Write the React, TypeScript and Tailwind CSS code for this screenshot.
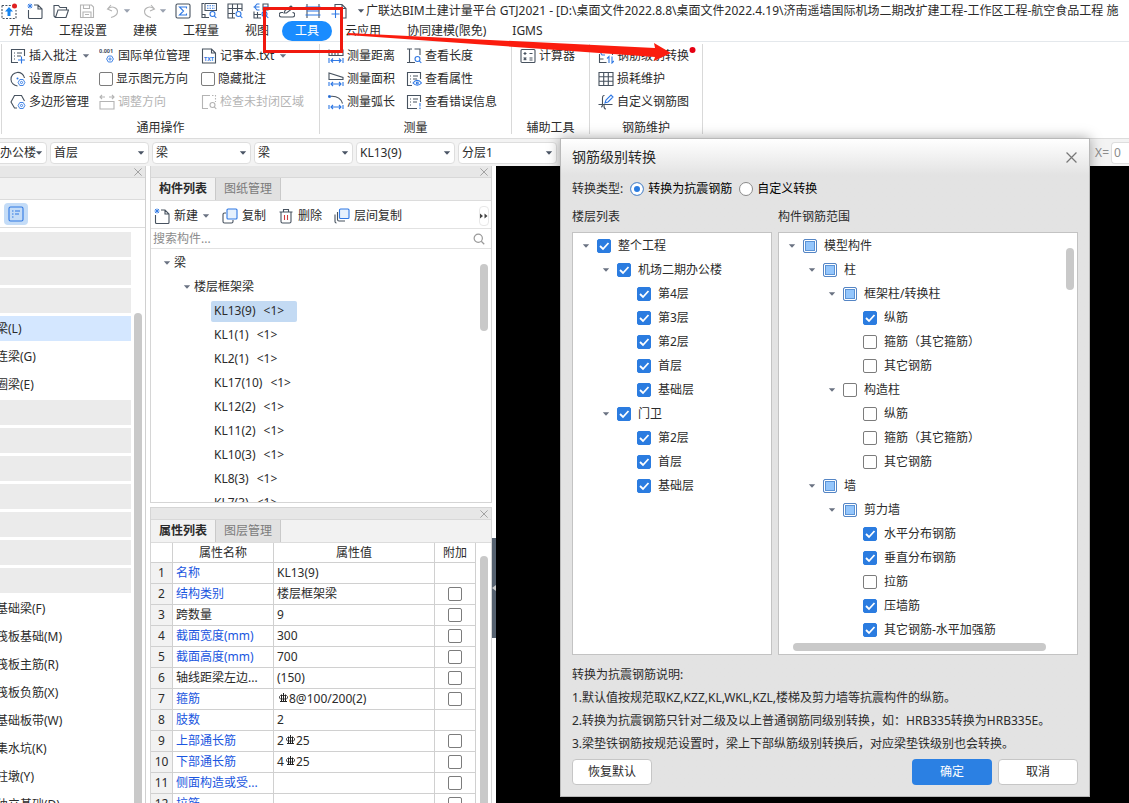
import { useState } from "react";
import type { ReactNode } from "react";
import clsx from "clsx";

const DARK = "#47525f";
const BLUE = "#2f78e4";
const GREY = "#b4b4b4";

const Svg = ({ children, color = DARK, size = 16 }: { children: ReactNode; color?: string; size?: number }) => (
  <svg width={size} height={size} viewBox="0 0 16 16" fill="none" stroke={color} strokeWidth="1.1" className="shrink-0" aria-hidden="true">
    {children}
  </svg>
);

const Caret = ({ className = "text-gray-600" }: { className?: string }) => (
  <svg width="8" height="8" viewBox="0 0 8 8" className={clsx("shrink-0", className)} aria-hidden="true">
    <path d="M0.800 2.200h6.400L4 5.800z" fill="currentColor" />
  </svg>
);

const Gear = ({ x = 11.5, y = 11.5 }: { x?: number; y?: number }) => (
  <g stroke={BLUE} strokeWidth="0.9">
    <path d={`M${x - 1.7} ${y - 3}h3.4l1.7 3l-1.7 3h-3.4l-1.7 -3z`} fill="#fff" />
    <circle cx={x} cy={y} r="1.1" />
  </g>
);

const Lens = ({ color = BLUE }: { color?: string }) => (
  <g stroke={color}>
    <circle cx="11.5" cy="11" r="2.5" fill="#fff" />
    <path d="M13.3 12.8l2 2.2" />
  </g>
);

const icons = {
  update: (
    <Svg>
      <path d="M1 2.500h9M1 2.500v13h14V7" strokeDasharray="2 1.4" />
      <path d="M8 4l4 4.500H9.500V13h-3V8.500H4z" fill="#1684f0" stroke="none" />
      <circle cx="13.500" cy="3" r="2.500" fill="#e02020" stroke="none" />
    </Svg>
  ),
  create: (
    <Svg>
      <path d="M7 2h4l4 4v8.500a1 1 0 0 1-1 1H2.500a1 1 0 0 1-1-1V7M11 2v4h4" />
      <path d="M1 1l4 4M5 1L1 5M3 0.500v5M0.500 3h5" stroke={BLUE} strokeWidth="0.9" />
    </Svg>
  ),
  open: (
    <Svg>
      <path d="M2.500 14.500L1 13V2.500h4.500l1.500 2h6.500V7M2.500 14.500L5 7h10.500L13 14.500z" />
    </Svg>
  ),
  save: (
    <Svg color={GREY}>
      <path d="M1.500 2h11l2 2v10.500h-13zM4.500 2v3.500h6V2M4 14.500V9h8v5.500M6 11.500h4" />
    </Svg>
  ),
  undo: (
    <Svg color={GREY}>
      <path d="M6 2L2.500 6l4.500 2M2.500 6c5-4 10-1 10 2.500S10 13.500 6 14.500" />
    </Svg>
  ),
  redo: (
    <Svg color={GREY}>
      <path d="M10 2l3.500 4L9 8M13.500 6c-5-4-10-1-10 2.500s2.500 5 6.500 6" />
    </Svg>
  ),
  sum: (
    <Svg>
      <rect x="1" y="1" width="14" height="14" rx="1.500" />
      <path d="M11.500 5.500V4h-7l4 4-4 4h7v-1.500" stroke={BLUE} />
    </Svg>
  ),
  calcView: (
    <Svg>
      <path d="M4 0.500h11.500v7H4zM3 0.500H1v14h7M1 11.500h3v3" />
      <path d="M6 2.700h8M6 5.200h8" stroke={BLUE} strokeDasharray="1.500 1" />
      <Lens />
    </Svg>
  ),
  tableView: (
    <Svg>
      <path d="M15 8V1H1v14h7M1 5.500h14M1 10.500h7M5.500 1v14M10.500 1v7" />
      <Lens />
    </Svg>
  ),
  unitView: (
    <Svg>
      <path d="M1 8.500V15h7M1 11.500h7M4.500 9v6M10 1h5v6h-5z" />
      <path d="M6.500 1H4L1.500 4 4 7h2.500M0.500 4h6M10 4h5" stroke={BLUE} />
      <Lens />
    </Svg>
  ),
  draw: (
    <Svg>
      <path d="M6 7.500L12 3l2 2-6.500 5H5z" />
      <path d="M4 9.500H2.500a2 2 0 0 0 0 4.500h11a2 2 0 0 0 0-4.500" />
    </Svg>
  ),
  span: (
    <Svg>
      <path d="M2 1v14M14 1v14" />
      <path d="M0.500 4h15M0.500 12h15M2 8h12" stroke={BLUE} />
    </Svg>
  ),
  addPage: (
    <Svg>
      <path d="M4 5V1.500h7l4 4V15H9M11 1.500v4h4" />
      <path d="M4.500 7v8M0.500 11h8" stroke={BLUE} />
    </Svg>
  ),
  note: (
    <Svg>
      <path d="M8 14.500H1.500v-13h13V8M4 5h1M7 5h5M4 8h1M7 8h4M4 11h1" />
      <path d="M11.500 8.500v7M8 12h7" stroke={BLUE} />
    </Svg>
  ),
  origin: (
    <Svg>
      <path d="M14.500 7a6.800 6.800 0 1 0-7 8" />
      <circle cx="7.500" cy="7.500" r="1" fill={BLUE} stroke="none" />
      <Gear />
    </Svg>
  ),
  polygon: (
    <Svg>
      <path d="M14.500 7L11.500 1.500h-7L1 8l3.500 6H7" />
      <Gear />
    </Svg>
  ),
  txt: (
    <Svg>
      <path d="M1.500 1h9l4 4v10h-13zM10.500 1v4h4" />
      <text x="3" y="12.500" fontSize="5.500" fontWeight="700" fill={BLUE} stroke="none" fontFamily="Noto Sans">TXT</text>
    </Svg>
  ),
  unit: (
    <Svg>
      <text x="0" y="5" fontSize="5.500" fontWeight="700" fill={DARK} stroke="none" fontFamily="Noto Sans">0.001</text>
      <Gear x={11} y={11} />
    </Svg>
  ),
  adjust: (
    <Svg color={GREY}>
      <path d="M1 7.500h14V15H1zM1 3h5M10 3h5M3 1L1 3l2 2M13 1l2 2-2 2" />
    </Svg>
  ),
  closed: (
    <Svg color={GREY}>
      <path d="M7 14.500H1.500v-13H9" />
      <path d="M14.500 1v7M11 1.500h4" strokeDasharray="1.500 1.500" />
      <Lens color={GREY} />
    </Svg>
  ),
  distance: (
    <Svg>
      <path d="M1 1.500v6h14v-6M4 7.500V5M7 7.500V5M10 7.500V5" />
      <path d="M1 10v5M15 10v5M3 12.500h10M5 10.500l-2 2 2 2M11 10.500l2 2-2 2" stroke={BLUE} />
    </Svg>
  ),
  area: (
    <Svg>
      <path d="M1 2v6.500h14V6.500z" />
      <path d="M1 11v4M15 11v4M3 13h10M5 11l-2 2 2 2M11 11l2 2-2 2" stroke={BLUE} />
    </Svg>
  ),
  arc: (
    <Svg>
      <path d="M1 2.500c8-1 12 2 13.500 7" />
      <circle cx="1.500" cy="2.500" r="1" stroke={BLUE} />
      <path d="M1 11v4M15 11v4M3 13h10M5 11l-2 2 2 2M11 11l2 2-2 2" stroke={BLUE} />
    </Svg>
  ),
  length: (
    <Svg>
      <path d="M9 14.500H5M8.500 1h5.500v6M1 1h5M3.500 1v13.500M1 14.500h5" />
      <Lens />
    </Svg>
  ),
  property: (
    <Svg>
      <path d="M6 14.500H1.500v-13h13V8M4 5h1M7 5h5M4 8h1M7 8h4M4 11h1" />
      <path d="M7 12c2.500-3.500 6-3.500 8.500 0-2.500 3-6 3-8.500 0z" stroke={BLUE} fill="#fff" />
      <circle cx="11.300" cy="12" r="1" stroke={BLUE} />
    </Svg>
  ),
  error: (
    <Svg>
      <path d="M11 14.500H1.500v-13h13V8M4 5h1M7 5h5M4 8h1M7 8h4M4 11h1" />
      <path d="M14 9v3.500M14 13.500v1.500" stroke={BLUE} />
    </Svg>
  ),
  calculator: (
    <Svg>
      <rect x="1" y="1.500" width="14" height="13" rx="1" />
      <path d="M3.500 5.500h3M5 4v3M9.500 5.500h3M3.700 9.500l2.600 2.600M6.300 9.500l-2.600 2.600M9.500 10h3M9.500 12h3" />
    </Svg>
  ),
  convert: (
    <Svg>
      <path d="M1.500 6v8.500h7M14.500 7V3H9M1.500 11h4" />
      <path d="M7 2H4L2.500 4.500 4 7h3M2 4.500h4M11 15V8.500l-2 2M14 8.500V15l2-2" stroke={BLUE} />
    </Svg>
  ),
  grid: (
    <Svg>
      <path d="M1 1.500h14v13H1zM1 5.800h14M1 10.200h14M5.700 1.500v13M10.300 1.500v13" />
    </Svg>
  ),
  custom: (
    <Svg>
      <path d="M6.500 1.500C4 1 4.500 4 4.500 8s0 5-1.500 5M0.500 10.500h14M6 10.500c0 3 0 4.500 2 4.500" />
      <path d="M7 9l1-3 5-5 2 2-5 5z" stroke={BLUE} />
    </Svg>
  ),
  copy: (
    <Svg>
      <path d="M4 5H2.500A1.500 1.500 0 0 0 1 6.500v7A1.500 1.500 0 0 0 2.500 15h7a1.500 1.500 0 0 0 1.500-1.500V12" />
      <rect x="5" y="1" width="10" height="10" rx="1" stroke={BLUE} fill="#e6f1fd" />
    </Svg>
  ),
  remove: (
    <Svg>
      <path d="M1.500 4h13M5.500 4V1.500h5V4M3 4v9.500A1.500 1.500 0 0 0 4.500 15h7a1.500 1.500 0 0 0 1.500-1.500V4" />
      <path d="M6.500 7v5M9.500 7v5" stroke="#d23c3c" />
    </Svg>
  ),
  floorCopy: (
    <Svg>
      <path d="M1 6.500v7A1.500 1.500 0 0 0 2.500 15M3.500 4v7.500A1.500 1.500 0 0 0 5 13h6" />
      <rect x="5.500" y="1" width="9.500" height="9.500" rx="1" stroke={BLUE} fill="#e6f1fd" />
    </Svg>
  ),
  list: (
    <Svg color={BLUE}>
      <rect x="1" y="1" width="14" height="14" rx="1.500" />
      <path d="M4 5h1.500M7 5h5M4 8h1.500M7 8h4M4 11h1.500" />
    </Svg>
  ),
};

type IconName = keyof typeof icons;

const Close = ({ size = 8, className }: { size?: number; className?: string }) => (
  <svg width={size} height={size} viewBox="0 0 10 10" stroke="currentColor" strokeWidth="1.100" className={className} aria-hidden="true">
    <path d="M0.500 0.500l9 9M9.500 0.500l-9 9" />
  </svg>
);

type CheckState = "on" | "off" | "mixed";

const Check = ({ state = "off", id, label }: { state?: CheckState; id?: string; label?: string }) => {
  const [value, setValue] = useState(state);
  return (
    <span className="relative flex size-3.5 shrink-0">
      <input
        type="checkbox"
        id={id}
        aria-label={label}
        checked={value === "on"}
        onChange={() => setValue(value === "on" ? "off" : "on")}
        className={clsx(
          "size-3.5 appearance-none rounded-xs border",
          value === "on" && "border-[#2b7ce0] bg-[#2b7ce0]",
          value === "off" && "border-[#7c7c7c] bg-white",
          value === "mixed" && "border-[#5585c4] bg-[#94c6fc] shadow-[inset_0_0_0_1px_white,inset_0_0_0_2px_#5b93d6]",
        )}
      />
      {value === "on" && (
        <svg viewBox="0 0 14 14" className="pointer-events-none absolute inset-0" fill="none" stroke="#fff" strokeWidth="1.800" aria-hidden="true">
          <path d="M3 7l3 3 5.500-6" />
        </svg>
      )}
    </span>
  );
};

const Tool = ({ icon, children, caret, disabled }: { icon: IconName; children: ReactNode; caret?: boolean; disabled?: boolean }) => (
  <button type="button" disabled={disabled} className={clsx("flex h-[23px] items-center gap-[3px] whitespace-nowrap", disabled && "text-[#b4b4b4]")}>
    {icons[icon]}
    {children}
    {caret && <Caret className="ml-0.5 text-gray-500" />}
  </button>
);

const ToolCheck = ({ id, children }: { id: string; children: ReactNode }) => (
  <label htmlFor={id} className="flex h-[23px] items-center gap-[3px] whitespace-nowrap">
    <Check id={id} />
    {children}
  </label>
);

const RibbonGroup = ({ title, className, children }: { title: string; className: string; children: ReactNode }) => (
  <section className={clsx("flex shrink-0 flex-col border-r border-[#d9d9d9]", className)}>
    <div className="flex h-[76px] shrink-0 pl-2">{children}</div>
    <h2 className="text-center">{title}</h2>
  </section>
);

const quickIcons: IconName[] = ["update", "create", "open", "save"];
const viewIcons: IconName[] = ["sum", "calcView", "tableView", "unitView", "draw", "span", "addPage"];
const menuTabs = ["开始", "工程设置", "建模", "工程量", "视图", "工具", "云应用", "协同建模(限免)", "IGMS"];

const TitleBar = () => (
  <div className="flex h-[21px] items-center gap-2 pl-px">
    <div className="flex items-center gap-2.5">
      {quickIcons.map((name) => (
        <button key={name} type="button" aria-label={name}>{icons[name]}</button>
      ))}
      <button type="button" aria-label="undo" className="flex items-center gap-0.5">{icons.undo}<Caret className="text-gray-400" /></button>
      <button type="button" aria-label="redo" className="flex items-center gap-0.5">{icons.redo}<Caret className="text-gray-400" /></button>
    </div>
    <div className="flex items-center gap-2.5">
      {viewIcons.map((name) => (
        <button key={name} type="button" aria-label={name}>{icons[name]}</button>
      ))}
      <Caret />
    </div>
    <h1 className="-ml-[7px] whitespace-nowrap">
      广联达BIM土建计量平台 GTJ2021 - [D:\桌面文件2022.8.8\桌面文件2022.4.19\济南遥墙国际机场二期改扩建工程-工作区工程-航空食品工程 施
    </h1>
  </div>
);

const MenuBar = () => (
  <nav className="flex h-[21px] items-end gap-[26px] border-b border-[#e4e8ec] pl-[9px]">
    {menuTabs.map((tab) => (
      <button
        key={tab}
        type="button"
        className={clsx("h-5 whitespace-nowrap", tab === "工具" && "-mx-[13px] rounded-full bg-[#1a8cff] px-[13px] text-white")}
      >
        {tab}
      </button>
    ))}
  </nav>
);

const Ribbon = () => (
  <div className="flex h-[97px] border-b border-[#dcdcdc] pt-0.5 pb-1 pl-px">
    <RibbonGroup title="通用操作" className="w-[319px] border-l">
      <div className="w-[89px]">
        <Tool icon="note" caret>插入批注</Tool>
        <Tool icon="origin">设置原点</Tool>
        <Tool icon="polygon">多边形管理</Tool>
      </div>
      <div className="w-[102px]">
        <Tool icon="unit">国际单位管理</Tool>
        <ToolCheck id="show-direction">显示图元方向</ToolCheck>
        <Tool icon="adjust" disabled>调整方向</Tool>
      </div>
      <div>
        <Tool icon="txt" caret>记事本.txt</Tool>
        <ToolCheck id="hide-note">隐藏批注</ToolCheck>
        <Tool icon="closed" disabled>检查未封闭区域</Tool>
      </div>
    </RibbonGroup>
    <RibbonGroup title="测量" className="w-[192px]">
      <div className="w-[78px]">
        <Tool icon="distance">测量距离</Tool>
        <Tool icon="area">测量面积</Tool>
        <Tool icon="arc">测量弧长</Tool>
      </div>
      <div>
        <Tool icon="length">查看长度</Tool>
        <Tool icon="property">查看属性</Tool>
        <Tool icon="error">查看错误信息</Tool>
      </div>
    </RibbonGroup>
    <RibbonGroup title="辅助工具" className="w-[78px]">
      <Tool icon="calculator">计算器</Tool>
    </RibbonGroup>
    <RibbonGroup title="钢筋维护" className="w-[113px]">
      <div>
        <Tool icon="convert">钢筋级别转换</Tool>
        <Tool icon="grid">损耗维护</Tool>
        <Tool icon="custom">自定义钢筋图</Tool>
      </div>
    </RibbonGroup>
  </div>
);

const selectors = [
  { label: "楼层", value: "首层" },
  { label: "构件大类", value: "梁" },
  { label: "构件类型", value: "梁" },
  { label: "构件", value: "KL13(9)" },
  { label: "分层", value: "分层1" },
];

const Picker = ({ label, value, className }: { label: string; value: string; className: string }) => (
  <div className={clsx("relative h-[22px] shrink-0", className)}>
    <select aria-label={label} className="size-full appearance-none rounded-sm border border-[#dedede] bg-white pl-[3px]">
      <option>{value}</option>
    </select>
    <Caret className="pointer-events-none absolute top-[7px] right-1 text-gray-600" />
  </div>
);

const SelectorBar = () => (
  <div className="flex h-[27px] items-center gap-[3px] bg-[#f3f3f3]">
    <Picker label="工程" value="办公楼" className="-ml-1 w-[51px]" />
    {selectors.map((s) => (
      <Picker key={s.label} label={s.label} value={s.value} className="w-[99px]" />
    ))}
    <label className="ml-auto flex items-center gap-0.5 text-[#8c8c8c]">
      X=
      <input type="text" defaultValue="0" className="h-[22px] w-[18px] rounded-l-sm border border-r-0 border-[#dedede] bg-white pl-0.5" />
    </label>
  </div>
);

// empty strings are collapsed category bars
const navItems = [
  "", "", "", "梁(L)", "连梁(G)", "圈梁(E)", "", "", "", "", "", "", "",
  "基础梁(F)", "筏板基础(M)", "筏板主筋(R)", "筏板负筋(X)", "基础板带(W)", "集水坑(K)", "柱墩(Y)", "独立基础(D)",
];

const PanelHeader = () => (
  <div className="flex h-3 shrink-0 items-center justify-end border-b border-[#d8d8d8] bg-[#e7e7e7] pr-[3px] text-[#999]">
    <button type="button" aria-label="关闭面板"><Close /></button>
  </div>
);

const NavPanel = () => (
  <aside className="relative flex w-[146px] shrink-0 flex-col border-r border-[#d0d0d0]">
    <PanelHeader />
    <div className="h-[22px] shrink-0 border-b border-[#dcdcdc] bg-[#f2f2f2]" />
    <div className="flex h-7 shrink-0 items-center border-b border-[#dcdcdc] pl-1">
      <button type="button" aria-label="列表" className="flex h-[22px] w-6 items-center justify-center rounded-sm bg-[#c4dcf7]">{icons.list}</button>
    </div>
    <ul className="flex min-h-0 flex-1 flex-col gap-[3px] overflow-hidden pt-1 pr-3.5">
      {navItems.map((item, i) => (
        <li key={i} className={clsx("h-[25px] shrink-0", !item && "bg-[#ebebeb]", item === "梁(L)" && "bg-[#d4e7ff]")}>
          {item && <button type="button" className="-ml-1 h-full whitespace-nowrap">{item}</button>}
        </li>
      ))}
    </ul>
    <div className="absolute top-[147px] right-[3px] bottom-0 w-2 rounded-t-full bg-[#c9c9c9]" />
  </aside>
);

const PanelTabs = ({ active, other }: { active: string; other: string }) => (
  <div className="flex h-[23px] shrink-0 border-b border-[#dcdcdc] bg-[#f2f2f2]">
    <button type="button" className="w-[65px] border-r border-[#c9c9c9] font-bold">{active}</button>
    <button type="button" className="w-[65px] border-r border-[#c9c9c9] bg-[#e1e1e1] text-[#7b7b7b]">{other}</button>
  </div>
);

const beams = ["KL13(9)", "KL1(1)", "KL2(1)", "KL17(10)", "KL12(2)", "KL11(2)", "KL10(3)", "KL8(3)", "KL7(3)"];

const ComponentPanel = () => (
  <section className="relative flex h-[337px] shrink-0 flex-col border border-t-0 border-[#d5d5d5]">
    <PanelHeader />
    <PanelTabs active="构件列表" other="图纸管理" />
    <div className="flex h-7 shrink-0 items-center gap-3 border-b border-[#e2e2e2] pt-0.5 pl-[3px]">
      <button type="button" className="flex items-center gap-1">{icons.create}新建<Caret className="text-gray-500" /></button>
      <button type="button" className="flex items-center gap-1">{icons.copy}复制</button>
      <button type="button" className="flex items-center gap-1">{icons.remove}删除</button>
      <button type="button" className="flex items-center gap-1">{icons.floorCopy}层间复制</button>
      <button type="button" aria-label="更多" className="mr-0.5 ml-auto flex h-5 w-2.5 items-center justify-center rounded-sm border border-[#e8e8e8]">
        <svg width="8" height="6" viewBox="0 0 8 6" fill="#444" className="shrink-0" aria-hidden="true">
          <path d="M0 0.500L3 3 0 5.500zM4.500 0.500L7.500 3 4.500 5.500z" />
        </svg>
      </button>
    </div>
    <div className="flex h-5 shrink-0 items-center border-b border-[#e2e2e2] pr-1.5 pl-0.5">
      <input type="text" aria-label="搜索构件" placeholder="搜索构件..." className="min-w-0 flex-1 outline-none placeholder:text-[#8c8c8c]" />
      <Svg size={12} color="#999">
        <circle cx="7" cy="7" r="5.500" strokeWidth="1.600" />
        <path d="M11 11l4 4" strokeWidth="1.600" />
      </Svg>
    </div>
    <ul className="min-h-0 flex-1 overflow-hidden pt-0.5">
      <li className="flex h-6 items-center gap-[3px] pl-3"><Caret className="text-gray-500" />梁</li>
      <li className="flex h-6 items-center gap-[3px] pl-8"><Caret className="text-gray-500" />楼层框架梁</li>
      {beams.map((beam, i) => (
        <li key={beam} className="flex h-6 items-center pl-[60px]">
          <button type="button" className={clsx("flex h-[21px] items-center gap-2 rounded-xs px-[3px]", i === 0 && "w-[86px] bg-[#c3daf3]")}>
            <span>{beam}</span>
            <span>&lt;1&gt;</span>
          </button>
        </li>
      ))}
    </ul>
    <div className="absolute top-[98px] right-[3px] h-[67px] w-2 rounded-full bg-[#c9c9c9]" />
  </section>
);

const RebarMark = () => (
  <svg width="10" height="10" viewBox="0 0 10 10" fill="none" stroke="#222" className="mx-px mb-1 inline" aria-hidden="true">
    <path d="M5.500 0v9M3.500 1.500v7M7.500 1.500v7M2 8.500h7" />
    <path d="M2.500 2.500h6l1 1v1.500l-1 1h-6l-1-1V3.500z" strokeWidth="0.800" />
  </svg>
);

const properties: { name: string; value: ReactNode; blue?: boolean; extra?: boolean }[] = [
  { name: "名称", value: "KL13(9)", blue: true },
  { name: "结构类别", value: "楼层框架梁", blue: true, extra: true },
  { name: "跨数量", value: "9", extra: true },
  { name: "截面宽度(mm)", value: "300", blue: true, extra: true },
  { name: "截面高度(mm)", value: "700", blue: true, extra: true },
  { name: "轴线距梁左边...", value: "(150)", extra: true },
  { name: "箍筋", value: <><RebarMark />8@100/200(2)</>, blue: true, extra: true },
  { name: "肢数", value: "2", blue: true },
  { name: "上部通长筋", value: <>2<RebarMark />25</>, blue: true, extra: true },
  { name: "下部通长筋", value: <>4<RebarMark />25</>, blue: true, extra: true },
  { name: "侧面构造或受...", value: "", blue: true, extra: true },
  { name: "拉筋", value: "", blue: true, extra: true },
];

const PropertyPanel = () => (
  <section className="relative mt-1 flex min-h-0 flex-1 flex-col overflow-hidden border border-b-0 border-[#d5d5d5]">
    <PanelHeader />
    <PanelTabs active="属性列表" other="图层管理" />
    <table className="w-[325px] table-fixed border-separate border-spacing-0">
      <thead>
        <tr className="h-5">
          <th className="w-[22px] border-r border-b border-[#d0d0d0] p-0" />
          <th className="w-[101px] border-r border-b border-[#d0d0d0] p-0 font-normal">属性名称</th>
          <th className="border-r border-b border-[#d0d0d0] p-0 font-normal">属性值</th>
          <th className="w-[41px] border-r border-b border-[#d0d0d0] p-0 font-normal">附加</th>
        </tr>
      </thead>
      <tbody>
        {properties.map((p, i) => (
          <tr key={p.name} className="h-[21px]">
            <td className="border-r border-b border-[#d0d0d0] bg-[#f2f2f2] p-0 text-center">{i + 1}</td>
            <td className={clsx("border-r border-b border-[#d0d0d0] p-0 pl-[3px] whitespace-nowrap", p.blue && "text-[#1a56e0]")}>{p.name}</td>
            <td className="border-r border-b border-[#d0d0d0] p-0 pl-[3px] whitespace-nowrap">{p.value}</td>
            <td className="border-r border-b border-[#d0d0d0] p-0">
              {p.extra && <div className="flex justify-center"><Check label={p.name} /></div>}
            </td>
          </tr>
        ))}
      </tbody>
    </table>
    <div className="absolute top-12 right-[3px] bottom-0 w-2 rounded-t-full bg-[#c9c9c9]" />
  </section>
);

type Node = { depth: number; label: string; state: CheckState; leaf?: boolean };

const floors: Node[] = [
  { depth: 0, label: "整个工程", state: "on" },
  { depth: 1, label: "机场二期办公楼", state: "on" },
  { depth: 2, label: "第4层", state: "on", leaf: true },
  { depth: 2, label: "第3层", state: "on", leaf: true },
  { depth: 2, label: "第2层", state: "on", leaf: true },
  { depth: 2, label: "首层", state: "on", leaf: true },
  { depth: 2, label: "基础层", state: "on", leaf: true },
  { depth: 1, label: "门卫", state: "on" },
  { depth: 2, label: "第2层", state: "on", leaf: true },
  { depth: 2, label: "首层", state: "on", leaf: true },
  { depth: 2, label: "基础层", state: "on", leaf: true },
];

const ranges: Node[] = [
  { depth: 0, label: "模型构件", state: "mixed" },
  { depth: 1, label: "柱", state: "mixed" },
  { depth: 2, label: "框架柱/转换柱", state: "mixed" },
  { depth: 3, label: "纵筋", state: "on", leaf: true },
  { depth: 3, label: "箍筋（其它箍筋）", state: "off", leaf: true },
  { depth: 3, label: "其它钢筋", state: "off", leaf: true },
  { depth: 2, label: "构造柱", state: "off" },
  { depth: 3, label: "纵筋", state: "off", leaf: true },
  { depth: 3, label: "箍筋（其它箍筋）", state: "off", leaf: true },
  { depth: 3, label: "其它钢筋", state: "off", leaf: true },
  { depth: 1, label: "墙", state: "mixed" },
  { depth: 2, label: "剪力墙", state: "mixed" },
  { depth: 3, label: "水平分布钢筋", state: "on", leaf: true },
  { depth: 3, label: "垂直分布钢筋", state: "on", leaf: true },
  { depth: 3, label: "拉筋", state: "off", leaf: true },
  { depth: 3, label: "压墙筋", state: "on", leaf: true },
  { depth: 3, label: "其它钢筋-水平加强筋", state: "on", leaf: true },
];

const indent = ["pl-[9px]", "pl-[29px]", "pl-[49px]", "pl-[69px]"];

const CheckTree = ({ name, nodes }: { name: string; nodes: Node[] }) => (
  <ul className="pt-px">
    {nodes.map((node, i) => (
      <li key={i} className={clsx("flex h-6 items-center gap-[7px]", indent[node.depth])}>
        {node.leaf ? <span className="w-2" /> : <Caret className="text-gray-500" />}
        <Check id={`${name}-${i}`} state={node.state} />
        <label htmlFor={`${name}-${i}`} className="whitespace-nowrap">{node.label}</label>
      </li>
    ))}
  </ul>
);

const Radio = ({ id, checked, children }: { id: string; checked?: boolean; children: ReactNode }) => (
  <label htmlFor={id} className="flex items-center gap-1 text-black">
    <input
      id={id}
      type="radio"
      name="convert-type"
      defaultChecked={checked}
      className="size-3.5 appearance-none rounded-full border border-[#8a8a8a] bg-white checked:border-[#6a94c9] checked:bg-[#2b7ce0] checked:shadow-[inset_0_0_0_3px_white]"
    />
    {children}
  </label>
);

const ConvertDialog = () => (
  <div role="dialog" aria-labelledby="dialog-title" className="absolute top-[138px] right-[39px] flex w-[530px] flex-col border border-[#b9b9b9] bg-[#e3e3e3] bg-linear-to-b from-white to-[#e3e3e3] to-[36px] px-[11px] pb-[11px] shadow-[0_0_12px_rgba(0,0,0,0.35)]">
    <div className="flex h-9 items-center justify-between">
      <h2 id="dialog-title" className="text-sm">钢筋级别转换</h2>
      <button type="button" aria-label="关闭" className="mr-px text-[#777]"><Close size={11} /></button>
    </div>
    <div className="flex h-7 items-center gap-[7px]">
      <span>转换类型:</span>
      <Radio id="type-seismic" checked>转换为抗震钢筋</Radio>
      <Radio id="type-custom">自定义转换</Radio>
    </div>
    <div className="flex gap-1.5">
      <section className="w-[200px]">
        <h3 className="h-[29px] leading-7">楼层列表</h3>
        <div className="h-[423px] overflow-hidden border border-[#c3c3c3] bg-white">
          <CheckTree name="floor" nodes={floors} />
        </div>
      </section>
      <section className="flex-1">
        <h3 className="h-[29px] leading-7">构件钢筋范围</h3>
        <div className="relative h-[423px] overflow-hidden border border-[#c3c3c3] bg-white">
          <CheckTree name="range" nodes={ranges} />
          <div className="absolute top-[15px] right-[3px] h-[42px] w-2 rounded-full bg-[#c9c9c9]" />
          <div className="absolute bottom-[3px] left-3.5 h-2 w-[253px] rounded-full bg-[#c9c9c9]" />
        </div>
      </section>
    </div>
    <div className="mt-2 leading-[23px] whitespace-nowrap">
      <p>转换为抗震钢筋说明:</p>
      <p>1.默认值按规范取KZ,KZZ,KL,WKL,KZL,楼梯及剪力墙等抗震构件的纵筋。</p>
      <p>2.转换为抗震钢筋只针对二级及以上普通钢筋同级别转换，如：HRB335转换为HRB335E。</p>
      <p>3.梁垫铁钢筋按规范设置时，梁上下部纵筋级别转换后，对应梁垫铁级别也会转换。</p>
    </div>
    <div className="mt-1 flex gap-1.5">
      <button type="button" className="mr-auto h-[26px] w-20 rounded-sm border border-[#c6c6c6] bg-white">恢复默认</button>
      <button type="button" className="h-[26px] w-20 rounded-sm bg-[#2b80e3] text-white">确定</button>
      <button type="button" className="h-[26px] w-20 rounded-sm border border-[#c6c6c6] bg-white">取消</button>
    </div>
  </div>
);

// red frame and arrow drawn over the ribbon
const Annotation = () => (
  <svg width="720" height="80" viewBox="0 0 720 80" className="pointer-events-none absolute top-0 left-0" aria-hidden="true">
    <rect x="264.500" y="8.500" width="77" height="43" fill="none" stroke="#f0190f" strokeWidth="3" />
    <path d="M348 33L655 48l-1-5 17 10-17 8 1-4L348 35z" fill="#fb1c0e" />
    <circle cx="692.500" cy="50" r="3" fill="#e60012" />
  </svg>
);

const App = () => {
  return (
    <div className="relative flex h-screen w-full flex-col overflow-hidden bg-white font-['Noto_Sans','Noto_Sans_CJK_SC',sans-serif] text-xs leading-4 text-[#2b2b2b]">
      <TitleBar />
      <MenuBar />
      <Ribbon />
      <SelectorBar />
      <main className="flex min-h-0 flex-1">
        <NavPanel />
        <div className="ml-1 flex w-[342px] shrink-0 flex-col">
          <ComponentPanel />
          <PropertyPanel />
        </div>
        <div className="flex flex-1 bg-black">
          <div className="w-1 bg-white">
            <button type="button" aria-label="展开" className="mt-[372px] flex h-[100px] w-1 items-center bg-[#566270]">
              <svg width="4" height="6" viewBox="0 0 4 6" fill="#ccc" aria-hidden="true"><path d="M4 0v6L0 3z" /></svg>
            </button>
          </div>
        </div>
      </main>
      <ConvertDialog />
      <Annotation />
    </div>
  );
};

export default App;
